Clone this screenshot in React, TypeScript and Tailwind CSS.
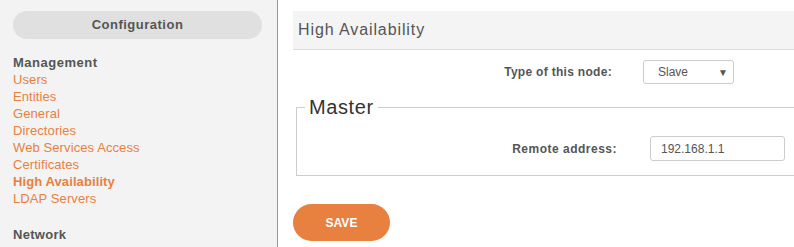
const LINKS = [
  'Users',
  'Entities',
  'General',
  'Directories',
  'Web Services Access',
  'Certificates',
  'High Availability',
  'LDAP Servers',
];

export default function App() {
  return (
    <div className="flex h-[247px] w-[794px] overflow-hidden bg-white font-['Liberation_Sans',Arial,sans-serif]">
      {/* Sidebar */}
      <aside className="w-[278px] shrink-0 border-r border-[#e8803f] bg-[#f3f3f3] pl-[13px] pr-[15px] pt-[11px]">
        <div className="flex h-[28px] items-center justify-center rounded-full bg-[#e0e0e0] text-[13px] font-bold tracking-[0.5px] text-[#555]">
          Configuration
        </div>
        <h3 className="mt-[15px] text-[13px] font-bold leading-[17px] tracking-[0.5px] text-[#555]">Management</h3>
        <ul className="text-[13px] leading-[17px] tracking-[0.1px] text-[#e8803f]">
          {LINKS.map(l => (
            <li key={l} className={l === 'High Availability' ? 'font-bold' : ''}>{l}</li>
          ))}
        </ul>
        <h3 className="mt-[19px] text-[13px] font-bold leading-[17px] tracking-[0.3px] text-[#555]">Network</h3>
      </aside>

      {/* Main */}
      <main className="flex-1 pl-[15px] pt-[11px]">
        <div className="flex h-[39px] items-center border-b border-[#ddd] bg-[#f4f4f4] pl-[5px] text-[16px] tracking-[0.9px] text-[#555]">
          High Availability
        </div>

        <div className="mt-[10px] flex items-center">
          <label className="w-[333px] pr-[14px] text-right text-[12px] font-bold tracking-[0.3px] text-[#555]">
            Type of this node:
          </label>
          <div className="ml-[17px] flex h-[24px] w-[91px] items-center justify-between rounded-[3px] border border-[#ccc] bg-white pl-[14px] pr-[5px] text-[12px] text-[#555]">
            <span>Slave</span>
            <span className="text-[10px] text-[#555]">▼</span>
          </div>
        </div>

        <fieldset className="ml-[3px] mr-[-10px] mt-[12px] h-[80px] border border-[#ccc] px-[8px]">
          <legend className="px-[4px] text-[20px] leading-[22px] tracking-[0.6px] text-[#333]">Master</legend>
          <div className="mt-[18px] flex items-center">
            <label className="w-[314px] pr-[2px] text-right text-[12px] font-bold tracking-[0.5px] text-[#555]">
              Remote address:
            </label>
            <div className="ml-[31px] flex h-[25px] w-[135px] items-center rounded-[3px] border border-[#ccc] bg-white pl-[10px] text-[12px] text-[#555]">
              192.168.1.1
            </div>
          </div>
        </fieldset>

        <button className="mt-[28px] flex h-[37px] w-[97px] items-center justify-center rounded-full bg-[#e8803f] text-[12px] font-bold text-white">
          SAVE
        </button>
      </main>
    </div>
  );
}
